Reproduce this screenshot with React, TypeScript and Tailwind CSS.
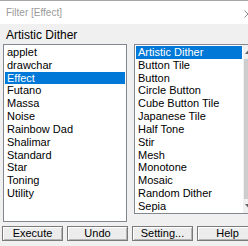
const groups = ['applet', 'drawchar', 'Effect', 'Futano', 'Massa', 'Noise', 'Rainbow Dad', 'Shalimar', 'Standard', 'Star', 'Toning', 'Utility'];

const filters = [
  'Artistic Dither',
  'Button Tile',
  'Button',
  'Circle Button',
  'Cube Button Tile',
  'Japanese Tile',
  'Half Tone',
  'Stir',
  'Mesh',
  'Monotone',
  'Mosaic',
  'Random Dither',
  'Sepia',
];

function ListItem({ label, selected }: { label: string; selected: boolean }) {
  return (
    <div
      className={`h-[12.83px] shrink-0 pl-[2px] text-[11px] leading-[12.83px] whitespace-nowrap ${selected ? 'bg-[#0078d7] text-white' : 'text-black'
        }`}
    >
      {label}
    </div>
  );
}

function WinButton({ label }: { label: string }) {
  return (
    <button className="w-[61px] h-[15px] shrink-0 border border-[#7a7a7a] bg-[#ececec] shadow-[inset_1px_1px_0_#ffffff,inset_-1px_-1px_0_#b4b4b4] text-[11px] leading-[13px] text-black">
      {label}
    </button>
  );
}

export default function App() {
  return (
    <div className="w-[248px] h-[246px] overflow-hidden bg-[#f0f0f0] border-t border-[#a6a6a6] flex flex-col font-['Liberation_Sans',Arial,sans-serif]">
      {/* Title bar */}
      <div className="h-[23px] shrink-0 bg-white flex items-center justify-between pl-[6px]">
        <span className="text-[10px] text-[#9a9a9a]">Filter [Effect]</span>
        <svg width="8" height="8" viewBox="0 0 8 8" className="mr-[-4px] mt-[2px]">
          <path d="M0.5 0.5 L7.5 7.5 M7.5 0.5 L0.5 7.5" stroke="#8c8c8c" strokeWidth="1" />
        </svg>
      </div>

      <div className="h-[20px] shrink-0 pl-[6px] pt-[4px] text-[12px] leading-[14px] text-black">Artistic Dither</div>

      {/* Lists */}
      <div className="w-[280px] h-[178px] shrink-0 flex items-start gap-[7px] pl-[3px]">
        <div className="w-[124px] h-[178px] shrink-0 border border-[#828790] bg-white p-[1px] flex flex-col">
          {groups.map((g) => (
            <ListItem key={g} label={g} selected={g === 'Effect'} />
          ))}
        </div>
        <div className="w-[130px] h-[170px] shrink-0 border border-[#828790] bg-white flex">
          <div className="w-[107px] shrink-0 p-[1px] pr-0 flex flex-col overflow-hidden">
            {filters.map((f) => (
              <ListItem key={f} label={f} selected={f === 'Artistic Dither'} />
            ))}
          </div>
          <div className="w-[17px] shrink-0 ml-[1px] bg-[#f0f0f0] flex flex-col">
            <div className="h-[14px] flex items-center pl-[2px]">
              <svg width="7" height="4" viewBox="0 0 7 4">
                <path d="M0 4 L3.5 0 L7 4 Z" fill="#606060" />
              </svg>
            </div>
            <div className="flex-1 mx-[1px] bg-[#cdcdcd]" />
            <div className="h-[14px] flex items-center pl-[2px]">
              <svg width="7" height="4" viewBox="0 0 7 4">
                <path d="M0 0 L3.5 4 L7 0 Z" fill="#606060" />
              </svg>
            </div>
          </div>
        </div>
      </div>

      {/* Buttons */}
      <div className="w-[280px] shrink-0 flex gap-[4px] pl-[2px] mt-[4px]">
        <WinButton label="Execute" />
        <WinButton label="Undo" />
        <WinButton label="Setting..." />
        <WinButton label="Help" />
      </div>
    </div>
  );
}
